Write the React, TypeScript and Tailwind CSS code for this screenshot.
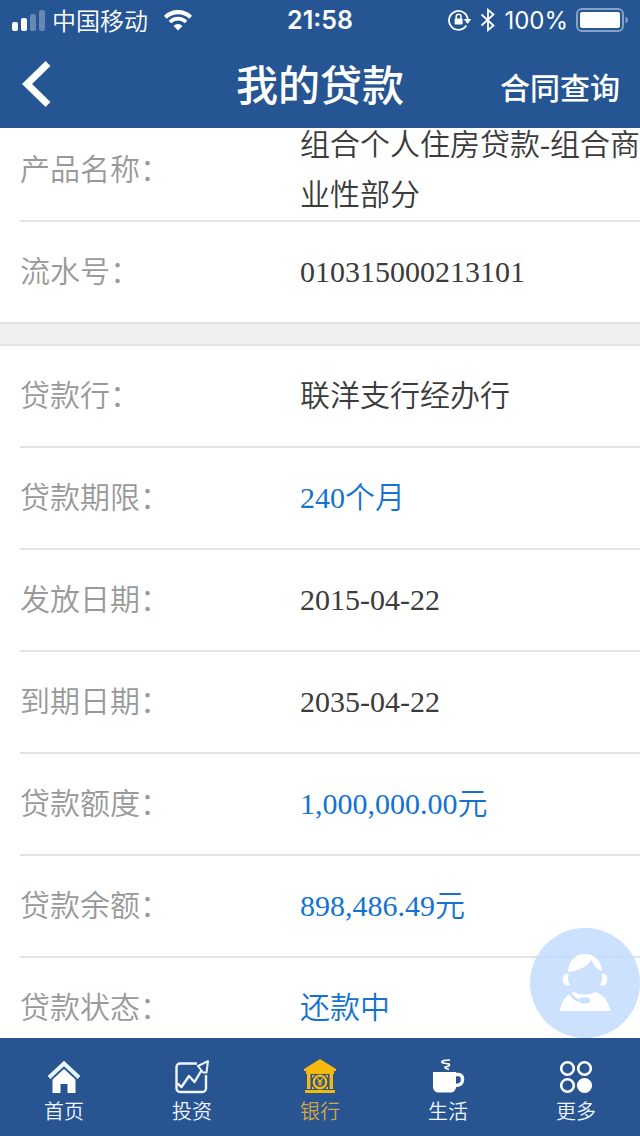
import React from 'react'

interface LoanField {
  label: string
  value: string
  highlight?: boolean
}

const PRODUCT_FIELDS: LoanField[] = [
  { label: '产品名称', value: '组合个人住房贷款-组合商业性部分' },
  { label: '流水号', value: '010315000213101' },
]

const LOAN_FIELDS: LoanField[] = [
  { label: '贷款行', value: '联洋支行经办行' },
  { label: '贷款期限', value: '240个月', highlight: true },
  { label: '发放日期', value: '2015-04-22' },
  { label: '到期日期', value: '2035-04-22' },
  { label: '贷款额度', value: '1,000,000.00元', highlight: true },
  { label: '贷款余额', value: '898,486.49元', highlight: true },
  { label: '贷款状态', value: '还款中', highlight: true },
]

const SignalIcon = () => (
  <svg width="34" height="21" viewBox="0 0 34 21" fill="#fff" aria-hidden="true">
    <rect x="0" y="12" width="6" height="9" rx="2" />
    <rect x="9" y="8" width="6" height="13" rx="2" />
    <rect x="18" y="4" width="6" height="17" rx="2" opacity="0.3" />
    <rect x="27" y="0" width="6" height="21" rx="2" opacity="0.3" />
  </svg>
)

const WifiIcon = () => (
  <svg width="28" height="21" viewBox="0 0 28 21" fill="none" stroke="#fff" aria-hidden="true">
    <path d="M1.3 7.3a18 18 0 0 1 25.4 0" strokeWidth="4.2" />
    <path d="M5.9 12a11.5 11.5 0 0 1 16.2 0" strokeWidth="3.6" />
    <path d="M14 20.5l-4.5-4.6a6.4 6.4 0 0 1 9 0z" fill="#fff" stroke="none" />
  </svg>
)

const RotationLockIcon = () => (
  <svg width="24" height="22" viewBox="0 0 24 22" fill="none" aria-hidden="true">
    <path d="M18.3 16.5A9.4 9.4 0 1 1 19.8 11" stroke="#fff" strokeWidth="1.8" />
    <path d="M15.8 10h7.4l-3.6 5z" fill="#fff" />
    <rect x="6.6" y="9.6" width="8" height="6" rx="1" fill="#fff" />
    <path d="M8.2 10V7.6a2.4 2.4 0 0 1 4.8 0V10" stroke="#fff" strokeWidth="1.5" />
  </svg>
)

const BluetoothIcon = () => (
  <svg width="16" height="24" viewBox="0 0 16 24" fill="none" stroke="#fff" strokeWidth="1.8" aria-hidden="true">
    <path d="M1.5 6.5l12 11L8 22.2V1.8l5.5 4.7-12 11" />
  </svg>
)

const BatteryIcon = () => (
  <svg width="52" height="24" viewBox="0 0 52 24" aria-hidden="true">
    <rect x="1" y="1" width="46" height="22" rx="5" fill="none" stroke="#fff" strokeOpacity="0.45" strokeWidth="2" />
    <rect x="4" y="4" width="40" height="16" rx="2" fill="#fff" />
    <path d="M49.5 8.5q2.5 1 2.5 3.5t-2.5 3.5z" fill="#fff" fillOpacity="0.45" />
  </svg>
)

const BackIcon = () => (
  <svg width="32" height="48" viewBox="0 0 32 48" fill="none" stroke="#fff" strokeWidth="7" aria-hidden="true">
    <path d="M28 3.5L7 24l21 20.5" />
  </svg>
)

const HomeIcon = () => (
  <svg width="34" height="34" viewBox="0 0 34 34" aria-hidden="true">
    <path d="M2 17.5L17 3.5l15 14" fill="none" stroke="#e6f6ff" strokeWidth="4" />
    <path d="M5.5 19.5L17 9l11.5 10.5V33h-8v-9h-7v9h-8z" fill="#fff" />
  </svg>
)

const InvestIcon = () => (
  <svg width="34" height="34" viewBox="0 0 34 34" fill="none" stroke="currentColor" strokeWidth="2.4" strokeLinejoin="round" aria-hidden="true">
    <path d="M22 3.5H5A3.5 3.5 0 0 0 1.5 7v21.5A3.5 3.5 0 0 0 5 32h22.5a3.5 3.5 0 0 0 3.5-3.5V15" />
    <path d="M2.5 23.5L6.5 27 14 16l5.500 6L27 9.5" />
    <path d="M33 1.200L23 6l5 6.500h3.500z" fill="#285492" strokeWidth="2" />
  </svg>
)

const BankIcon = () => (
  <svg width="34" height="36" viewBox="0 0 34 36" fill="#f5b90f" aria-hidden="true">
    <path d="M17 1L33 11v2H1v-2z" />
    <path d="M3 13h28v3H3zM4 16h3.500v15H4zM26.500 16H30v15h-3.500zM2 32h30v3H2z" />
    <path d="M9 17h3l-3 3zM25 17h-3l3 3zM9 31h3l-3-3zM25 31h-3l3-3z" />
    <circle cx="17" cy="24" r="6.200" fill="none" stroke="#f5b90f" strokeWidth="2.400" />
    <path d="M14.500 20.500l2.500 3 2.500-3M17 23v5M14.500 23.800h5M14.500 26h5" fill="none" stroke="#f5b90f" strokeWidth="1.200" />
  </svg>
)

const LifeIcon = () => (
  <svg width="34" height="36" viewBox="0 0 34 36" aria-hidden="true">
    <path d="M2 14h23v15a5.500 5.500 0 0 1-5.500 5.500h-12A5.500 5.500 0 0 1 2 29z" fill="#fff" />
    <path d="M25 16.500h2.500a4 4 0 0 1 4 4v1.500c0 3.500-3 5.500-7 5.500" fill="none" stroke="#fff" strokeWidth="3.400" />
    <path d="M19 2c-5 0-9 1-8 2.500s8 .5 7.500 2.500-5 1.500-4.500 2.500 2 1 4 2" fill="none" stroke="#fff" strokeWidth="1.700" />
  </svg>
)

const MoreIcon = () => (
  <svg width="34" height="34" viewBox="0 0 34 34" fill="none" stroke="#fff" strokeWidth="2.600" aria-hidden="true">
    <circle cx="8.500" cy="8.500" r="6.300" />
    <circle cx="25.500" cy="8.500" r="6.300" />
    <circle cx="8.500" cy="25.500" r="6.300" />
    <circle cx="25.500" cy="25.500" r="6.300" fill="#fff" />
  </svg>
)

const ServiceIcon = () => (
  <svg width="52" height="60" viewBox="0 0 52 60" fill="#fff" aria-hidden="true">
    <path d="M9 18C10 7 17 1 26 1s16 6 17 17l-4-2C36 14 34 11 32.500 7 28 14 19 18 9 19z" />
    <path d="M8 20.500c-3.500 0-5 4-4 8s4 5 7 3.500c-2-3-2.500-6.500-1.500-11.500zM44 20.500c3.500 0 5 4 4 8s-4 5-7 3.500c2-3 2.500-6.500 1.500-11.500z" />
    <path d="M9 42l6-3q11 5 22 0C46 43 50 50 51.500 58H.5C2 51 5 45 9 42z" />
    <path d="M11 39c2 5.500 5 8 10 8.500" fill="none" stroke="#cbe0fd" strokeWidth="2.500" />
    <rect x="20" y="44.500" width="11" height="6" rx="3" fill="#cbe0fd" />
  </svg>
)

const TABS = [
  { name: '首页', icon: <HomeIcon /> },
  { name: '投资', icon: <InvestIcon /> },
  { name: '银行', icon: <BankIcon /> },
  { name: '生活', icon: <LifeIcon /> },
  { name: '更多', icon: <MoreIcon /> },
]

const StatusBar = () => (
  <div className="grid grid-cols-[1fr_auto_1fr] items-center h-10 px-3 text-2xl">
    <div className="flex items-center">
      <SignalIcon />
      <span className="ml-1.5 mr-4 pt-1 font-[350]">中国移动</span>
      <WifiIcon />
    </div>
    <span className="pt-0.5 text-[25px] font-semibold font-['Inter',sans-serif]">21:58</span>
    <div className="flex items-center justify-end gap-2">
      <RotationLockIcon />
      <BluetoothIcon />
      <span className="pt-0.5 font-['Inter',sans-serif]">100%</span>
      <BatteryIcon />
    </div>
  </div>
)

const LoanList = ({ fields }: { fields: LoanField[] }) => (
  <dl className="bg-white pl-5">
    {fields.map((field) => (
      <div
        key={field.label}
        className="box-content flex items-center min-h-[100px] border-b-2 border-[#e3e3e3] last:border-b-0"
      >
        <dt className="w-[280px] shrink-0 text-[#999]">{field.label}：</dt>
        <dd className={field.highlight ? 'text-[#1473d0]' : 'text-[#3b3b3b]'}>{field.value}</dd>
      </div>
    ))}
  </dl>
)

const App = () => {
  return (
    <div className="relative flex flex-col h-screen bg-white font-['Liberation_Sans','Noto_Sans_CJK_SC',sans-serif]">
      <header className="shrink-0 bg-[#255593] text-white">
        <StatusBar />
        <div className="grid grid-cols-[1fr_auto_1fr] items-center h-[88px] px-5">
          <button type="button" aria-label="返回" className="justify-self-start">
            <BackIcon />
          </button>
          <h1 className="pt-1 text-[42px] font-medium">我的贷款</h1>
          <a href="#contract" className="justify-self-end pt-2 text-[30px] font-medium">
            合同查询
          </a>
        </div>
      </header>

      <main className="flex-1 min-h-0 overflow-hidden text-[30px] leading-[50px] font-[350] font-['Liberation_Serif','Noto_Sans_CJK_SC',serif]">
        {/* list is scrolled a little way down */}
        <div className="-mt-2">
          <LoanList fields={PRODUCT_FIELDS} />
          <div className="h-6 border-y-2 border-[#e3e3e3] bg-[#f0f0f0]" />
          <LoanList fields={LOAN_FIELDS} />
        </div>
      </main>

      <nav className="grid grid-cols-5 shrink-0 h-[98px] bg-[#285492] text-white">
        {TABS.map((tab) => (
          <button
            key={tab.name}
            type="button"
            className={`flex flex-col items-center justify-end gap-1 pb-2.5 text-xl font-[350] ${
              tab.name === '银行' ? 'text-[#d3a545]' : 'text-[#eef6ff]'
            }`}
          >
            {tab.icon}
            <span>{tab.name}</span>
          </button>
        ))}
      </nav>

      <button
        type="button"
        aria-label="在线客服"
        className="absolute right-0 bottom-[98px] flex items-center justify-center size-[110px] rounded-full bg-[#bfdafd]/80"
      >
        <ServiceIcon />
      </button>
    </div>
  )
}

export default App
